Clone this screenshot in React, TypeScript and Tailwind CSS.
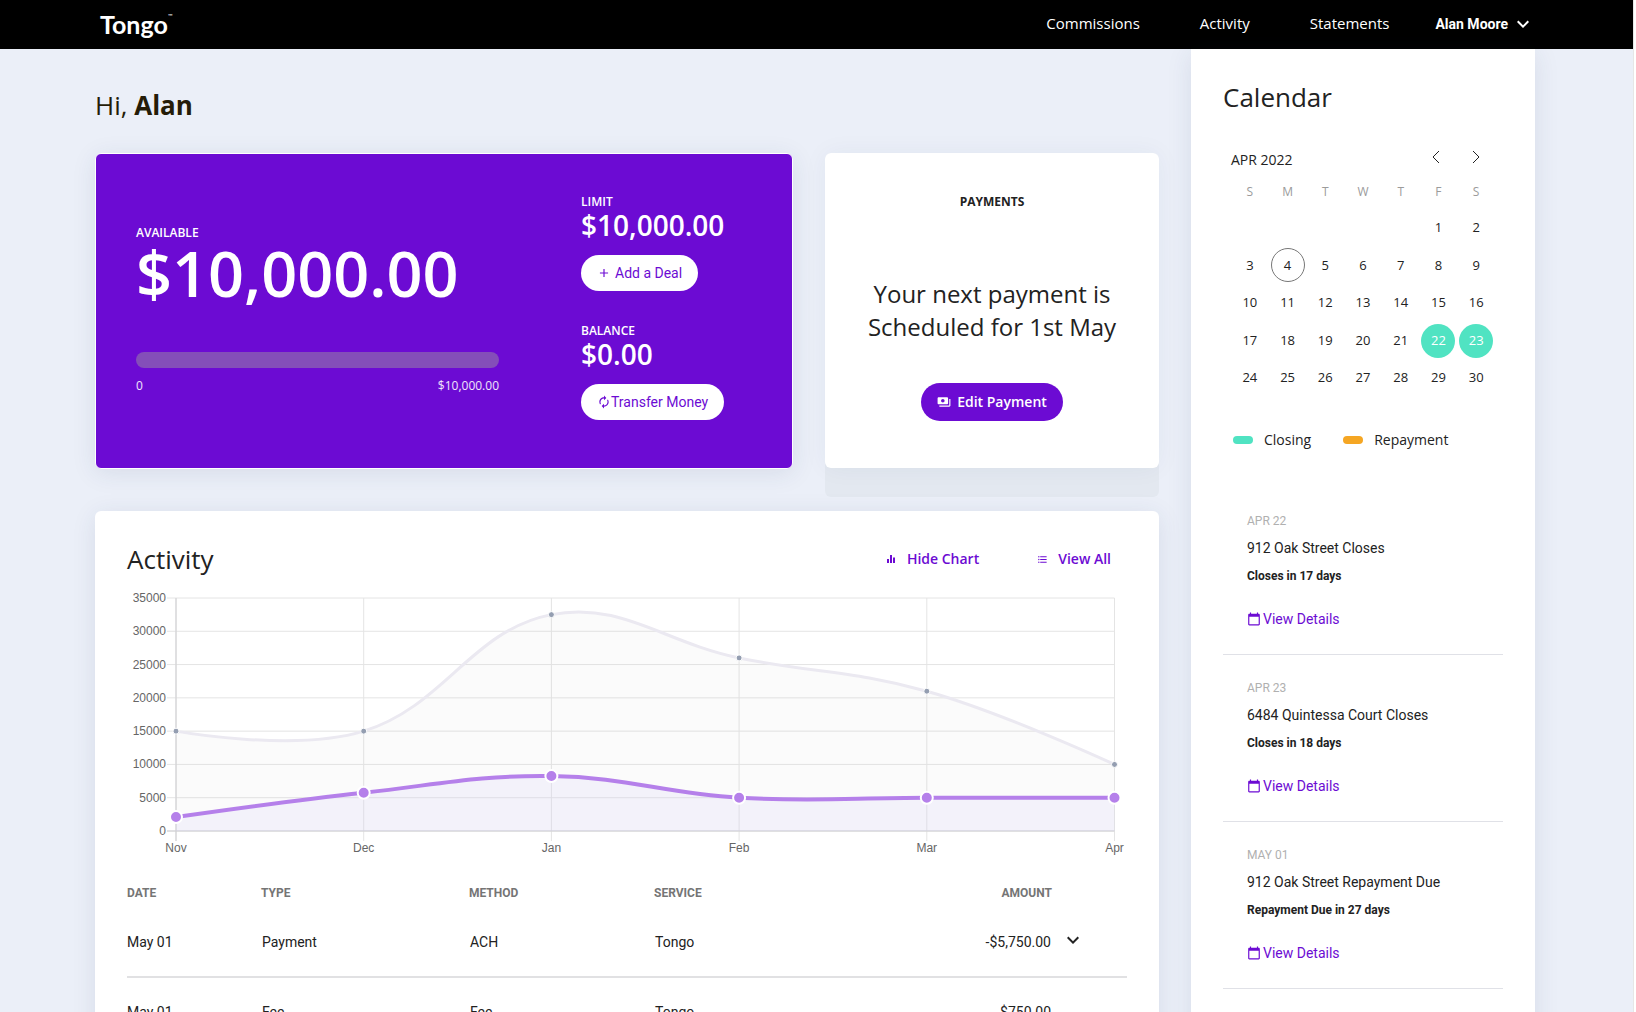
import React from 'react';
import {
  MdAdd,
  MdAutorenew,
  MdCalendarToday,
  MdEqualizer,
  MdFormatListBulleted,
  MdKeyboardArrowDown,
  MdPayments,
} from 'react-icons/md';

const cardShadow = 'shadow-[0_4px_24px_rgba(40,60,100,0.1)]';

function Header() {
  return (
    <header className="bg-black text-white">
      <div className="flex h-[49px] items-center justify-between pr-[98px] pb-[2px] pl-[100px]">
        <a href="#home" aria-label="Tongo home" className="flex items-start font-['Lato',sans-serif]">
          <span className="text-[25px] leading-9 font-bold">Tongo</span>
          <sup className="top-0 pt-1.5 text-[6px] leading-2">™</sup>
        </a>
        <nav className="flex items-center text-[15px]">
          <a href="#commissions">Commissions</a>
          <a href="#activity" className="ml-[60px]">Activity</a>
          <a href="#statements" className="ml-[60px]">Statements</a>
          <button type="button" className="ml-[46px] flex items-center gap-[3px] font-['Roboto',sans-serif] text-sm font-bold">
            Alan Moore
            <MdKeyboardArrowDown size={24} />
          </button>
        </nav>
      </div>
    </header>
  );
}

function Stat({ label, value, children }: { label: string; value: string; children: React.ReactNode }) {
  return (
    <div className="flex flex-col items-start">
      <h3 className="text-xs font-semibold">{label}</h3>
      <p className="mb-[15px] text-[28px] leading-[30px] font-semibold">{value}</p>
      {children}
    </div>
  );
}

function CreditCard() {
  return (
    <section
      className={`flex flex-1 gap-[82px] rounded-md border border-white bg-[#6c0bd3] pr-16 pl-10 text-white ${cardShadow}`}
    >
      <div className="flex-1 pt-[71px]">
        <h3 className="text-xs font-semibold">AVAILABLE</h3>
        <p className="text-[63px] leading-16 font-semibold">$10,000.00</p>
        <div className="mt-[47px] h-4 rounded-full bg-[#844eb9]" role="progressbar" aria-label="Used credit" aria-valuenow={0} aria-valuemin={0} aria-valuemax={10000} />
        <div className="mt-2.5 flex justify-between text-xs text-white/90">
          <span>0</span>
          <span>$10,000.00</span>
        </div>
      </div>
      <div className="flex w-[147px] flex-col gap-8 pt-10">
        <Stat label="LIMIT" value="$10,000.00">
          <button type="button" className="flex h-9 items-center gap-1 rounded-full bg-white px-4 font-['Roboto',sans-serif] text-sm text-[#6c0bd3]">
            <MdAdd size={14} />
            Add a Deal
          </button>
        </Stat>
        <Stat label="BALANCE" value="$0.00">
          <button type="button" className="flex h-9 items-center rounded-full bg-white px-4 font-['Roboto',sans-serif] text-sm whitespace-nowrap text-[#6c0bd3]">
            <MdAutorenew size={14} />
            Transfer Money
          </button>
        </Stat>
      </div>
    </section>
  );
}

function PaymentsCard() {
  return (
    <div className="w-[334px] rounded-md bg-[#e3e8f0] pb-[29px]">
      <section className="flex h-[315px] flex-col items-center rounded-md bg-white pt-[41px] text-center shadow-[0_0_24px_rgba(40,60,100,0.05)]">
        <h2 className="text-xs font-bold">PAYMENTS</h2>
        <p className="mt-[67px] text-2xl leading-[33px]">
          Your next payment is
          <br />
          Scheduled for 1st May
        </p>
        <button type="button" className="mt-10 flex h-[38px] items-center gap-1.5 rounded-full bg-[#6c0bd3] px-4 text-sm font-semibold text-white">
          <MdPayments size={14} />
          Edit Payment
        </button>
      </section>
    </div>
  );
}

type Point = { x: number; y: number };

const months = ['Nov', 'Dec', 'Jan', 'Feb', 'Mar', 'Apr'];
const ticks = [0, 5000, 10000, 15000, 20000, 25000, 30000, 35000];
const limitSeries = [15000, 15000, 32500, 26000, 21000, 10000];
const balanceSeries = [2100, 5750, 8250, 5000, 5000, 5000];

const left = 49;
const right = 987.5;
const top = 7;
const bottom = 240;

const toX = (i: number) => left + ((right - left) * i) / (months.length - 1);
const toY = (v: number) => bottom - ((bottom - top) * v) / 35000;
const toPoints = (values: number[]): Point[] => values.map((v, i) => ({ x: toX(i), y: toY(v) }));

function smoothPath(pts: Point[], tension = 0.4) {
  const handles = pts.map((p, i) => {
    const prev = pts[i - 1] ?? p;
    const next = pts[i + 1] ?? p;
    const d0 = Math.hypot(p.x - prev.x, p.y - prev.y);
    const d1 = Math.hypot(next.x - p.x, next.y - p.y);
    const a = (tension * d0) / (d0 + d1);
    const b = (tension * d1) / (d0 + d1);
    return {
      before: { x: p.x - a * (next.x - prev.x), y: p.y - a * (next.y - prev.y) },
      after: { x: p.x + b * (next.x - prev.x), y: p.y + b * (next.y - prev.y) },
    };
  });
  handles[0].after = pts[0];
  handles[pts.length - 1].before = pts[pts.length - 1];
  return pts.reduce((d, p, i) => {
    if (i === 0) return `M${p.x} ${p.y}`;
    const c1 = handles[i - 1].after;
    const c2 = handles[i].before;
    return `${d} C${c1.x} ${c1.y} ${c2.x} ${c2.y} ${p.x} ${p.y}`;
  }, '');
}

function Chart() {
  const limit = toPoints(limitSeries);
  const balance = toPoints(balanceSeries);
  const close = ` L${right} ${bottom} L${left} ${bottom} Z`;
  return (
    <svg viewBox="0 0 1000 270" className="mt-[14px] block w-full font-['Liberation_Sans',sans-serif] text-xs" role="img" aria-label="Activity from November to April">
      <g stroke="#e4e4e4" strokeWidth="1">
        {ticks.map((t) => (
          <line key={t} x1={left - 9} x2={right} y1={toY(t)} y2={toY(t)} />
        ))}
        {months.map((m, i) => (
          <line key={m} x1={toX(i)} x2={toX(i)} y1={top} y2={bottom + 10} />
        ))}
      </g>
      <g stroke="#cfcfd2" strokeWidth="1">
        <line x1={left} x2={left} y1={top} y2={bottom + 10} />
        <line x1={left - 9} x2={right} y1={bottom} y2={bottom} />
      </g>
      <path d={smoothPath(limit) + close} fill="#c8c8c8" fillOpacity="0.08" />
      <path d={smoothPath(balance) + close} fill="#d8d2fa" fillOpacity="0.2" />
      <path d={smoothPath(limit)} fill="none" stroke="#ebe9f1" strokeWidth="3" />
      <path d={smoothPath(balance)} fill="none" stroke="#b580ea" strokeWidth="4" />
      {limit.map((p) => (
        <circle key={p.x} cx={p.x} cy={p.y} r="3" fill="#949eb1" stroke="#fff" strokeWidth="1" />
      ))}
      {balance.map((p) => (
        <circle key={p.x} cx={p.x} cy={p.y} r="6" fill="#b580ea" stroke="#fff" strokeWidth="2" />
      ))}
      <g fill="#666">
        {ticks.map((t) => (
          <text key={t} x={left - 10} y={toY(t) + 4} textAnchor="end">{t}</text>
        ))}
        {months.map((m, i) => (
          <text key={m} x={toX(i)} y={bottom + 21} textAnchor="middle">{m}</text>
        ))}
      </g>
    </svg>
  );
}

const rows = [
  { date: 'May 01', type: 'Payment', method: 'ACH', service: 'Tongo', amount: '-$5,750.00', expandable: true },
  { date: 'May 01', type: 'Fee', method: 'Fee', service: 'Tongo', amount: '$750.00', expandable: false },
];

function ActivityTable() {
  return (
    <table className="mt-[17px] w-full table-fixed font-['Roboto',sans-serif] text-sm">
      <thead>
        <tr className="h-[29px] text-left text-xs text-[#757575]">
          <th className="w-[13.4%] p-0">DATE</th>
          <th className="w-[20.8%] p-0">TYPE</th>
          <th className="w-[18.5%] p-0">METHOD</th>
          <th className="p-0">SERVICE</th>
          <th className="w-[14%] p-0 text-right">AMOUNT</th>
          <td className="w-[7.5%] p-0" />
        </tr>
      </thead>
      <tbody>
        {rows.map((r) => (
          <tr key={r.type} className="h-[70px] border-b-2 border-[#e1e1e3]">
            <td className="p-0">{r.date}</td>
            <td className="p-0 pl-px">{r.type}</td>
            <td className="p-0 pl-px">{r.method}</td>
            <td className="p-0 pl-px">{r.service}</td>
            <td className="p-0 pr-px text-right">{r.amount}</td>
            <td className="p-0 pb-1 pl-[9px]">
              {r.expandable && (
                <button type="button" aria-label={`Expand ${r.type}`} className="block">
                  <MdKeyboardArrowDown size={24} />
                </button>
              )}
            </td>
          </tr>
        ))}
      </tbody>
    </table>
  );
}

function ActivityCard() {
  return (
    <section className={`flex-1 rounded-t-md bg-white px-8 pt-[30px] ${cardShadow}`}>
      <div className="flex items-center justify-between pr-4">
        <h2 className="text-[26px] leading-9">Activity</h2>
        <div className="flex gap-[58px] text-sm font-semibold text-[#6c0bd3]">
          <button type="button" className="flex items-center gap-2.5">
            <MdEqualizer size={12} />
            Hide Chart
          </button>
          <button type="button" className="flex items-center gap-2.5">
            <MdFormatListBulleted size={11} />
            View All
          </button>
        </div>
      </div>
      <Chart />
      <ActivityTable />
    </section>
  );
}

const weekdays = ['S', 'M', 'T', 'W', 'T', 'F', 'S'];
const closings = [22, 23];
const today = 4;

function Calendar() {
  return (
    <div className="px-2">
      <div className="flex items-center justify-between">
        <h3 className="text-sm">APR 2022</h3>
        <div className="flex gap-4 pr-[7px] pb-1.5">
          <button type="button" aria-label="Previous month" className="flex size-6 items-center justify-center">
            <svg width="8" height="14" viewBox="0 0 8 14" fill="none" stroke="#222" strokeWidth="1"><path d="M7 1 1 7l6 6" /></svg>
          </button>
          <button type="button" aria-label="Next month" className="flex size-6 items-center justify-center">
            <svg width="8" height="14" viewBox="0 0 8 14" fill="none" stroke="#222" strokeWidth="1"><path d="m1 1 6 6-6 6" /></svg>
          </button>
        </div>
      </div>
      <div className="mt-[9px] grid grid-cols-7 text-center text-xs text-[#9b9b9b]">
        {weekdays.map((d, i) => (
          <span key={i}>{d}</span>
        ))}
      </div>
      <div className="mt-[9px] grid h-[188px] grid-cols-7 grid-rows-5 place-items-center text-[13px]">
        {Array.from({ length: 30 }, (_, i) => i + 1).map((day) => (
          <button
            key={day}
            type="button"
            className={`size-[34px] rounded-full ${day === 1 ? 'col-start-6' : ''} ${day === today ? 'border border-[#777]' : ''} ${
              closings.includes(day) ? 'bg-[#50e3c2] text-white' : ''
            }`}
          >
            {day}
          </button>
        ))}
      </div>
      <div className="mt-[33px] flex items-center gap-8 pl-0.5 text-sm">
        <span className="flex items-center gap-[11px]"><i className="h-2 w-5 rounded-full bg-[#50e3c2]" />Closing</span>
        <span className="flex items-center gap-[11px]"><i className="h-2 w-5 rounded-full bg-[#f5a623]" />Repayment</span>
      </div>
    </div>
  );
}

const events = [
  { date: 'APR 22', title: '912 Oak Street Closes', due: 'Closes in 17 days' },
  { date: 'APR 23', title: '6484 Quintessa Court Closes', due: 'Closes in 18 days' },
  { date: 'MAY 01', title: '912 Oak Street Repayment Due', due: 'Repayment Due in 27 days' },
];

function Sidebar() {
  return (
    <aside className={`w-[344px] bg-white px-8 pt-[30px] ${cardShadow}`}>
      <h2 className="mb-[30px] text-[26px] leading-9">Calendar</h2>
      <Calendar />
      <ul className="mt-[38px] font-['Roboto',sans-serif] text-sm">
        {events.map((e) => (
          <li key={e.date} className="border-b border-[#e0e1e7] px-6 pt-[23px] pb-[25px]">
            <p className="text-xs leading-5 text-[#b0b0b0]">{e.date}</p>
            <p className="mt-[7px]">{e.title}</p>
            <p className="mt-2 text-xs leading-5 font-bold">{e.due}</p>
            <a href="#details" className="mt-[23px] flex items-center gap-0.5 text-[#6c0bd3]">
              <MdCalendarToday size={14} />
              View Details
            </a>
          </li>
        ))}
      </ul>
    </aside>
  );
}

export default function App() {
  return (
    <div className="h-screen overflow-hidden bg-white pr-[2px] font-['Open_Sans',sans-serif] text-[#222]">
      <div className="flex min-h-full flex-col border-r border-[#e6e6e6] bg-[#ebeff8]">
        <Header />
        <div className="flex flex-1 gap-8 pr-[98px] pl-[95px]">
          <main className="flex flex-1 flex-col">
            <h1 className="mt-[38px] text-[26px] leading-9 text-[#251c08]">
              Hi, <strong>Alan</strong>
            </h1>
            <div className="mt-[30px] flex items-start gap-8">
              <div className="flex h-[316px] flex-1">
                <CreditCard />
              </div>
              <PaymentsCard />
            </div>
            <div className="mt-[14px] flex flex-1">
              <ActivityCard />
            </div>
          </main>
          <Sidebar />
        </div>
      </div>
    </div>
  );
}
